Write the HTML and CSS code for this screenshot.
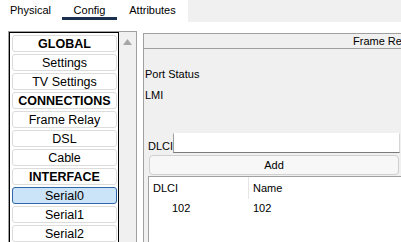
FILE: index.html
```html
<!DOCTYPE html>
<html lang="en">
<head>
  <meta charset="UTF-8" />
  <title>Config</title>
  <link rel="stylesheet" href="styles.css">
</head>
<body>
<div class="tabs">
  <div class="tab tab-physical">Physical</div>
  <div class="tab tab-config active">Config</div>
  <div class="tab tab-attr">Attributes</div>
  <div class="tabs-fill"></div>
</div>
<div class="main">
  <div class="sidebar">
    <div class="list">
      <div class="item head">GLOBAL</div>
      <div class="item">Settings</div>
      <div class="item">TV Settings</div>
      <div class="item head">CONNECTIONS</div>
      <div class="item">Frame Relay</div>
      <div class="item">DSL</div>
      <div class="item">Cable</div>
      <div class="item head">INTERFACE</div>
      <div class="item selected">Serial0</div>
      <div class="item">Serial1</div>
      <div class="item">Serial2</div>
    </div>
    <div class="scroll">
      <svg class="arrow" width="9" height="6" viewBox="0 0 9 6"><polygon points="4.5,0 9,6 0,6" fill="#a6a6a6"/></svg>
    </div>
  </div>
  <div class="panel">
    <div class="panel-head">Frame Relay</div>
    <div class="panel-body">
      <div class="field port">Port Status</div>
      <div class="field lmi">LMI</div>
      <div class="dlci-row">
        <label class="dlci-label">DLCI</label>
        <div class="dlci-input"></div>
      </div>
      <div class="add-btn">Add</div>
      <div class="table">
        <div class="row row-head">
          <div class="cell c1">DLCI</div>
          <div class="cell c2">Name</div>
        </div>
        <div class="row">
          <div class="cell c1 num">102</div>
          <div class="cell c2">102</div>
        </div>
      </div>
    </div>
  </div>
</div>
</body>
</html>
```

FILE: styles.css
```css
* { margin: 0; padding: 0; box-sizing: border-box; }
body {
  font-family: "Liberation Sans", Arial, sans-serif;
  color: #000;
  background: #fff;
  width: 401px;
  height: 242px;
  overflow: hidden;
}

/* tabs */
.tabs { display: flex; height: 22px; font-size: 11px; }
.tab {
  padding-top: 3px;
  line-height: 14px;
  height: 20px;
  margin-bottom: 2px;
  border-bottom: 3px solid transparent;
}
.tab-physical { width: 62px; padding-left: 10px; }
.tab-config { width: 55px; text-align: center; }
.tab-attr { width: 71px; text-align: center; }
.tab.active { border-bottom-color: #1b2f4e; }
.tabs-fill { flex: 1; background: #f0f0f0; }

/* layout */
.main {
  display: flex;
  height: 220px;
  padding: 9px 0 0 8px;
}

/* left list */
.sidebar {
  display: flex;
  width: 129px;
  border-top: 1px solid #a0a0a0;
  border-left: 1px solid #a0a0a0;
  border-right: 1px solid #a0a0a0;
}
.list {
  width: 110px;
  border-top: 1px solid #000;
  border-left: 1px solid #000;
  border-right: 1px solid #000;
  padding: 2px 1px 0 2px;
  overflow: hidden;
  font-size: 12.5px;
}
.item {
  height: 17px;
  line-height: 16px;
  margin-bottom: 2px;
  text-align: center;
  background: #fff;
  border: 1px solid #dcdcdc;
  border-radius: 3px;
}
.item.head { font-weight: 700; }
.item.selected {
  background: #cce4f7;
  border-color: #2f67a8;
}
.scroll {
  width: 17px;
  background: #f0f0f0;
  padding: 7px 0 0 4px;
}
.arrow { display: block; }

/* right panel */
.panel {
  flex: 1;
  margin: 2px 0 0 6px;
  border-top: 1px solid #a0a0a0;
  border-left: 1px solid #a0a0a0;
  background: #f0f0f0;
  display: flex;
  flex-direction: column;
  overflow: hidden;
  font-size: 11px;
}
.panel-head {
  height: 15px;
  line-height: 14px;
  padding-left: 209px;
  white-space: nowrap;
  border-bottom: 1px solid #a0a0a0;
}
.panel-body {
  flex: 1;
  display: flex;
  flex-direction: column;
}
.field { line-height: 14px; padding-left: 1px; }
.port { margin-top: 18px; }
.lmi { margin-top: 7px; }

.dlci-row {
  display: flex;
  align-items: flex-end;
  margin-top: 31px;
  height: 20px;
}
.dlci-label {
  flex: none;
  white-space: nowrap;
  padding-left: 4px;
  line-height: 14px;
}
.dlci-input {
  flex: 1;
  height: 20px;
  margin-right: 1px;
  background: #fff;
  border-top: 1px solid #fff;
  border-left: 1px solid #a0a0a0;
  border-bottom: 1px solid #7a7a7a;
  border-right: 1px solid #d5d5d5;
}
.add-btn {
  height: 20px;
  line-height: 18px;
  margin: 2px 2px 0 5px;
  text-align: center;
  background: #f7f7f7;
  border: 1px solid #d0d0d0;
  border-radius: 4px;
}

.table {
  flex: 1;
  margin: 1px -20px 0 4px;
  background: #fff;
  border-top: 1px solid #a0a0a0;
  border-left: 1px solid #a0a0a0;
}
.row { display: flex; height: 18px; line-height: 18px; }
.row-head { height: 22px; line-height: 23px; }
.cell { padding-left: 4px; }
.c1 { width: 100px; }
.row-head .c1 { border-right: 1px solid #e5e5e5; }
.num { padding-left: 23px; }
```
